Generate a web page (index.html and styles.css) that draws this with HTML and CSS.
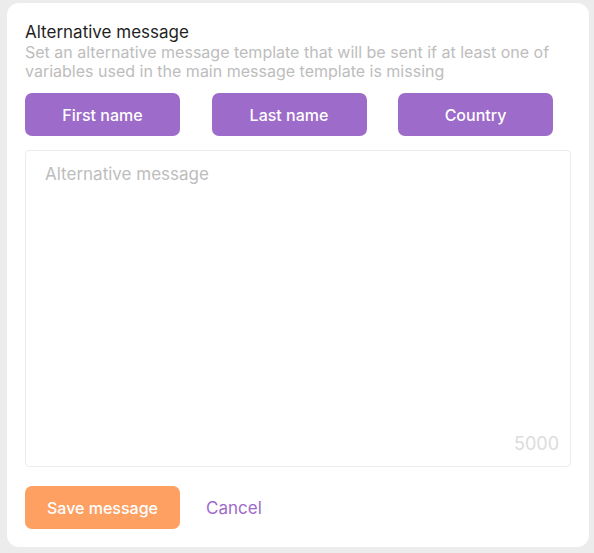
FILE: index.html
```html
<!DOCTYPE html>
<html>
<head>
<meta charset="utf-8">
<link rel="stylesheet" href="styles.css">
</head>
<body>
<div class="card">
  <h2 class="title">Alternative message</h2>
  <p class="desc">Set an alternative message template that will be sent if at least one of variables used in the main message template is missing</p>
  <div class="vars">
    <button class="var">First name</button>
    <button class="var">Last name</button>
    <button class="var">Country</button>
  </div>
  <div class="area">
    <div class="placeholder">Alternative message</div>
    <div class="count">5000</div>
  </div>
  <div class="actions">
    <button class="save">Save message</button>
    <button class="cancel">Cancel</button>
  </div>
</div>
</body>
</html>
```
FILE: styles.css
```css
html, body {
  margin: 0;
  padding: 0;
  background: #ececec;
  width: 594px;
  height: 553px;
  overflow: hidden;
}
body {
  padding: 3px 5px 0 7px;
  box-sizing: border-box;
  font-family: Inter, "Noto Sans", sans-serif;
}
.card {
  background: #fff;
  border-radius: 12px;
  width: 582px;
  height: 544px;
  box-sizing: border-box;
  padding: 18px 18px 0 18px;
  display: flex;
  flex-direction: column;
}
.title {
  margin: 0;
  font-size: 17px;
  font-weight: 400;
  color: #1f1f1f;
  line-height: 22px;
}
.desc {
  margin: 0;
  font-size: 16px;
  line-height: 19px;
  color: #bdbdbd;
  width: 540px;
}
.vars {
  display: flex;
  justify-content: space-between;
  width: 528px;
  margin-top: 12px;
}
.var {
  width: 155px;
  height: 43px;
  border: none;
  border-radius: 7px;
  background: #9d6bc9;
  color: #fff;
  font-family: inherit;
  font-size: 16px;
  font-weight: 500;
  cursor: pointer;
}
.area {
  margin-top: 14px;
  height: 317px;
  border: 1px solid #ececec;
  border-radius: 4px;
  position: relative;
  box-sizing: border-box;
  width: 546px;
}
.placeholder {
  position: absolute;
  left: 19px;
  top: 13px;
  font-size: 17px;
  color: #bdbdbd;
}
.count {
  position: absolute;
  right: 11px;
  bottom: 12px;
  font-size: 18px;
  color: #dcdcdc;
}
.actions {
  display: flex;
  align-items: center;
  margin-top: 19px;
  gap: 26px;
}
.save {
  width: 155px;
  height: 43px;
  border: none;
  border-radius: 7px;
  background: #fda062;
  color: #fff;
  font-family: inherit;
  font-size: 16px;
  font-weight: 500;
}
.cancel {
  background: none;
  border: none;
  padding: 0;
  color: #9d6bc9;
  font-family: inherit;
  font-size: 17px;
}
```
